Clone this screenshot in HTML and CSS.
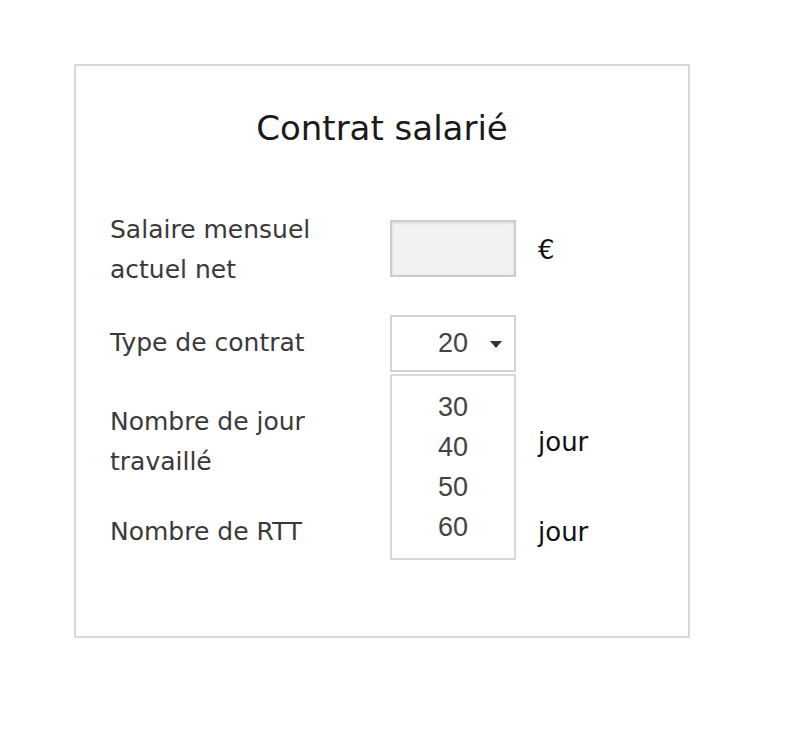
FILE: index.html
```html
<!DOCTYPE html>
<html lang="fr">
<head>
<meta charset="utf-8">
<title>Contrat salarié</title>
<link rel="stylesheet" href="styles.css">
</head>
<body>
<div class="card">
  <h1 class="title">Contrat salarié</h1>
  <div class="form">
    <div class="label">Salaire mensuel<br>actuel net</div>
    <div class="control"><div class="input"></div></div>
    <div class="unit">€</div>

    <div class="label">Type de contrat</div>
    <div class="control">
      <div class="select">
        <span class="select-value">20</span>
        <span class="caret"></span>
        <ul class="options">
          <li>30</li>
          <li>40</li>
          <li>50</li>
          <li>60</li>
        </ul>
      </div>
    </div>
    <div class="unit"></div>

    <div class="label">Nombre de jour<br>travaillé</div>
    <div class="control"></div>
    <div class="unit">jour</div>

    <div class="label">Nombre de RTT</div>
    <div class="control"></div>
    <div class="unit">jour</div>
  </div>
</div>
</body>
</html>
```

FILE: styles.css
```css
html, body {
  margin: 0;
  padding: 0;
  background: #ffffff;
}

body {
  font-family: "Comic Sans MS", "DejaVu Sans", sans-serif;
  color: #333333;
}

.card {
  box-sizing: border-box;
  margin: 64px 0 0 74px;
  width: 616px;
  height: 574px;
  border: 2px solid #d9d9d9;
  padding: 40px 0 0 34px;
}

.title {
  margin: 0 0 60px -34px;
  font-weight: normal;
  font-size: 34px;
  line-height: 44px;
  text-align: center;
  color: #1a1a1a;
}

.form {
  display: grid;
  grid-template-columns: 258px 126px auto;
  grid-template-rows: 80px 54px 92px 36px;
  column-gap: 22px;
  row-gap: 26px;
  align-items: center;
}

.label {
  font-size: 25px;
  line-height: 40px;
  color: #3a3a3a;
  white-space: nowrap;
}

.unit {
  font-size: 26px;
  color: #111111;
}

.control {
  position: relative;
  height: 100%;
  display: flex;
  align-items: center;
}

.input {
  box-sizing: border-box;
  width: 126px;
  height: 57px;
  margin-top: -3px;
  border: 2px solid #cccccc;
  background: #f2f2f2;
  box-shadow: inset 0 1px 3px rgba(0, 0, 0, 0.12);
}

.select {
  position: relative;
  box-sizing: border-box;
  width: 126px;
  height: 57px;
  border: 2px solid #d4d4d4;
  background: #ffffff;
  display: flex;
  align-items: center;
  justify-content: flex-end;
  padding-right: 12px;
  font-family: "Liberation Sans", Arial, sans-serif;
  font-size: 27px;
  color: #444444;
}

.select-value {
  margin-right: 22px;
}

.caret {
  width: 0;
  height: 0;
  margin-top: 2px;
  border-left: 6px solid transparent;
  border-right: 6px solid transparent;
  border-top: 7px solid #333333;
}

.options {
  position: absolute;
  left: -2px;
  top: calc(100% + 4px);
  box-sizing: border-box;
  width: 126px;
  height: 186px;
  margin: 0;
  padding: 11px 0 0;
  list-style: none;
  border: 2px solid #d9d9d9;
  background: #ffffff;
  text-align: center;
}

.options li {
  line-height: 40px;
  height: 40px;
}
```
